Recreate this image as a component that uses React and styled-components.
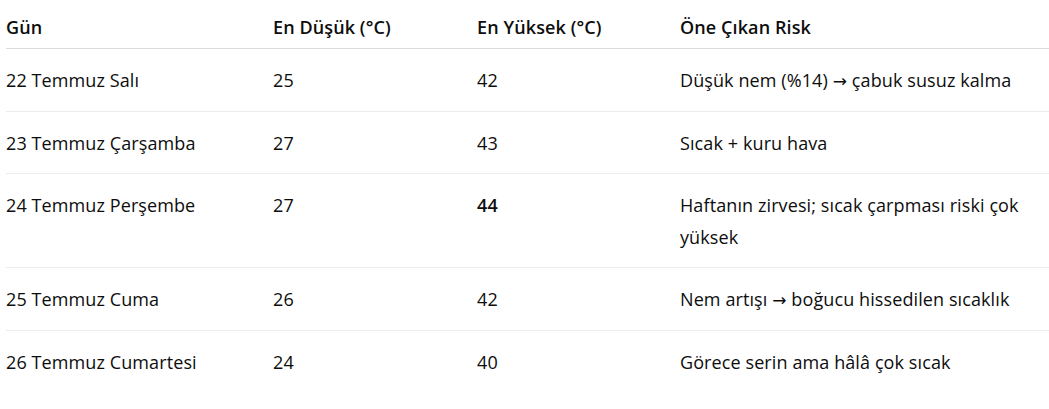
import React from 'react';
import styled, { createGlobalStyle } from 'styled-components';

const GlobalStyle = createGlobalStyle`
  body {
    margin: 0;
    background: #ffffff;
    font-family: "Open Sans", "Noto Sans", sans-serif;
    color: #0d0d0d;
  }
`;

const Arrow = styled.span`
  font-family: "DejaVu Sans", sans-serif;
  font-size: 17px;
`;

const rows = [
  { day: '22 Temmuz Salı', low: '25', high: '42', risk: <>Düşük nem (%14) <Arrow>→</Arrow> çabuk susuz kalma</> },
  { day: '23 Temmuz Çarşamba', low: '27', high: '43', risk: 'Sıcak + kuru hava' },
  { day: '24 Temmuz Perşembe', low: '27', high: '44', peak: true, risk: 'Haftanın zirvesi; sıcak çarpması riski çok yüksek' },
  { day: '25 Temmuz Cuma', low: '26', high: '42', risk: <>Nem artışı <Arrow>→</Arrow> boğucu hissedilen sıcaklık</> },
  { day: '26 Temmuz Cumartesi', low: '24', high: '40', risk: 'Görece serin ama hâlâ çok sıcak' },
];

const Wrapper = styled.div`
  padding-left: 6px;
`;

const Table = styled.table`
  width: 1043px;
  border-collapse: collapse;
  table-layout: fixed;
  font-size: 18px;
  letter-spacing: 0.1px;
`;

const HeadCell = styled.th`
  text-align: left;
  font-weight: 600;
  line-height: 32px;
  padding: 11px 0 5px;
  border-bottom: 1px solid #dcdcdc;
  width: ${props => props.width || 'auto'};
`;

const Row = styled.tr`
  border-bottom: ${props => (props.last ? 'none' : '1px solid #ececec')};
`;

const Cell = styled.td`
  vertical-align: top;
  line-height: 32px;
  padding: 15px 12px 14px 0;
  font-weight: ${props => (props.bold ? 600 : 400)};
`;

const App = () => (
  <Wrapper>
    <GlobalStyle />
    <Table>
      <thead>
        <tr>
          <HeadCell width="267px">Gün</HeadCell>
          <HeadCell width="204px">En Düşük (°C)</HeadCell>
          <HeadCell width="203px">En Yüksek (°C)</HeadCell>
          <HeadCell>Öne Çıkan Risk</HeadCell>
        </tr>
      </thead>
      <tbody>
        {rows.map((r, i) => (
          <Row key={r.day} last={i === rows.length - 1}>
            <Cell>{r.day}</Cell>
            <Cell>{r.low}</Cell>
            <Cell bold={r.peak}>{r.high}</Cell>
            <Cell>{r.risk}</Cell>
          </Row>
        ))}
      </tbody>
    </Table>
  </Wrapper>
);

export default App;
